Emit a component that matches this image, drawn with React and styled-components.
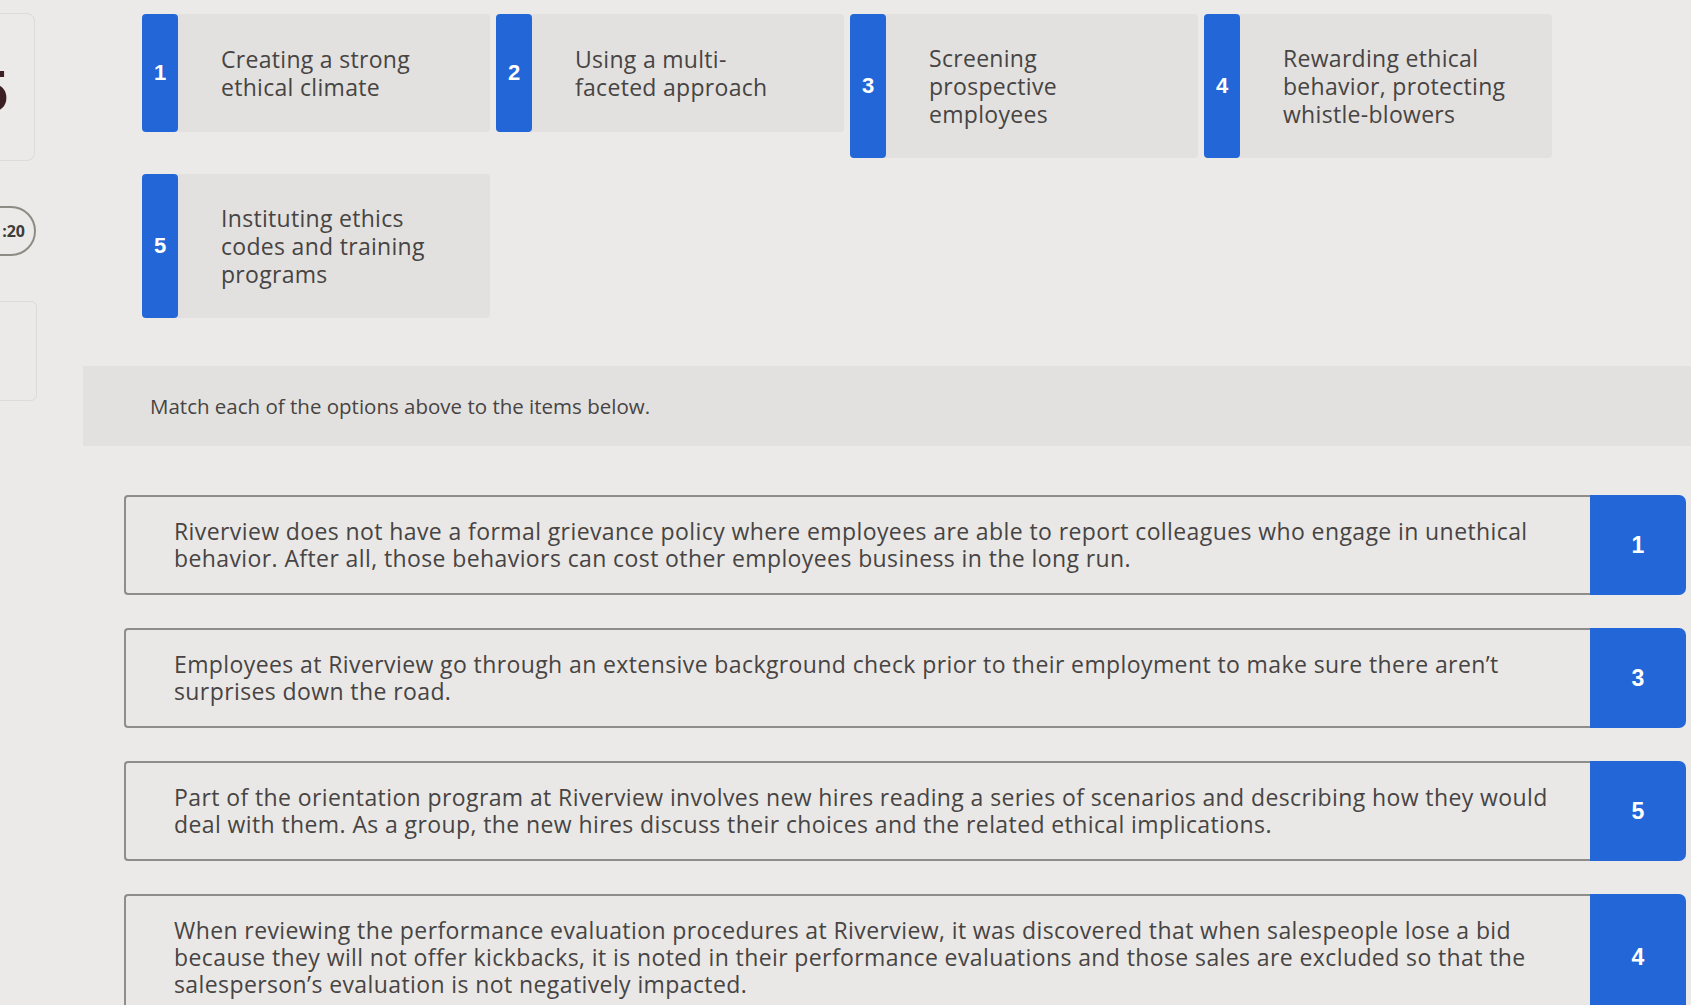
import styled, { createGlobalStyle } from "styled-components";

const options = [
  { n: 1, text: "Creating a strong ethical climate" },
  { n: 2, text: "Using a multi-faceted approach" },
  { n: 3, text: "Screening prospective employees" },
  { n: 4, text: "Rewarding ethical behavior, protecting whistle-blowers" },
  { n: 5, text: "Instituting ethics codes and training programs" },
];

const items = [
  {
    answer: 1,
    text: "Riverview does not have a formal grievance policy where employees are able to report colleagues who engage in unethical behavior. After all, those behaviors can cost other employees business in the long run.",
  },
  {
    answer: 3,
    text: "Employees at Riverview go through an extensive background check prior to their employment to make sure there aren\u2019t surprises down the road.",
  },
  {
    answer: 5,
    text: "Part of the orientation program at Riverview involves new hires reading a series of scenarios and describing how they would deal with them. As a group, the new hires discuss their choices and the related ethical implications.",
  },
  {
    answer: 4,
    text: "When reviewing the performance evaluation procedures at Riverview, it was discovered that when salespeople lose a bid because they will not offer kickbacks, it is noted in their performance evaluations and those sales are excluded so that the salesperson\u2019s evaluation is not negatively impacted.",
  },
];

const App = () => {
  return (
    <Page>
      <GlobalStyle />
      <Sidebar>
        <ProgressCard>
          <BigDigit>5</BigDigit>
        </ProgressCard>
        <TimerPill>:20</TimerPill>
        <EmptyBox />
      </Sidebar>
      <Main>
        <OptionsGrid>
          {options.map((o) => (
            <OptionCard key={o.n}>
              <NumberStrip>{o.n}</NumberStrip>
              <OptionBody>
                <OptionText>{o.text}</OptionText>
              </OptionBody>
            </OptionCard>
          ))}
        </OptionsGrid>
        <Instructions>
          <p>Match each of the options above to the items below.</p>
        </Instructions>
        <ItemList>
          {items.map((it, i) => (
            <ItemRow key={i}>
              <ItemText>{it.text}</ItemText>
              <AnswerBox>{it.answer}</AnswerBox>
            </ItemRow>
          ))}
        </ItemList>
      </Main>
    </Page>
  );
};

const GlobalStyle = createGlobalStyle`
  body {
    margin: 0;
    background-color: #ebeae8;
    font-family: "Open Sans", "Liberation Sans", sans-serif;
    color: #474443;
    overflow: hidden;
  }
`;

const Page = styled.div`
  display: flex;
  min-height: 1005px;
  background-color: #ebeae8;
`;

const Sidebar = styled.div`
  width: 38px;
  flex-shrink: 0;
  overflow: hidden;
  display: flex;
  flex-direction: column;
  align-items: flex-end;
  padding-top: 13px;
`;

const ProgressCard = styled.div`
  width: 80px;
  height: 148px;
  margin-right: 3px;
  border: 1px solid #dcdbd8;
  border-radius: 8px;
  display: flex;
  align-items: center;
  justify-content: flex-end;
  padding: 8px 26px 0 0;
  box-sizing: border-box;
`;

const BigDigit = styled.span`
  font-family: "Liberation Sans", sans-serif;
  font-size: 58px;
  font-weight: 700;
  color: #3b1f22;
  line-height: 1;
`;

const TimerPill = styled.div`
  margin-top: 45px;
  margin-right: 2px;
  width: 60px;
  height: 50px;
  border: 2px solid #8d8b83;
  border-radius: 0 26px 26px 0;
  display: flex;
  align-items: center;
  justify-content: flex-end;
  padding-right: 9px;
  box-sizing: border-box;
  font-size: 16px;
  font-weight: 700;
  color: #3e3c3a;
`;

const EmptyBox = styled.div`
  margin-top: 45px;
  margin-right: 1px;
  width: 60px;
  height: 98px;
  border: 1px solid #dcdbd8;
  border-radius: 6px;
`;

const Main = styled.div`
  flex: 1;
  padding-top: 14px;
`;

const OptionsGrid = styled.div`
  display: flex;
  flex-wrap: wrap;
  align-items: flex-start;
  column-gap: 6px;
  row-gap: 16px;
  margin-left: 104px;
  width: 1410px;
`;

const OptionCard = styled.div`
  display: flex;
  width: 348px;
  align-items: stretch;
  background-color: #e2e1df;
  border-radius: 4px;
  min-height: 118px;
`;

const NumberStrip = styled.div`
  width: 36px;
  flex-shrink: 0;
  background-color: #2366d8;
  border-radius: 4px;
  color: #fff;
  font-family: "Liberation Sans", sans-serif;
  font-weight: 700;
  font-size: 22px;
  display: flex;
  align-items: center;
  justify-content: center;
`;

const OptionBody = styled.div`
  padding: 30px 0 30px 43px;
  display: flex;
  align-items: center;
`;

const OptionText = styled.span`
  display: block;
  width: 228px;
  font-size: 23px;
  letter-spacing: 0.3px;
  line-height: 28px;
`;

const Instructions = styled.div`
  margin-top: 48px;
  margin-left: 45px;
  height: 80px;
  background-color: #e2e1df;
  display: flex;
  align-items: center;
  padding-left: 67px;
  font-size: 20.5px;

  p {
    margin: 0;
  }
`;

const ItemList = styled.div`
  display: flex;
  flex-direction: column;
  gap: 33px;
  margin: 49px 5px 0 86px;
`;

const ItemRow = styled.div`
  display: flex;
  align-items: stretch;
`;

const ItemText = styled.div`
  flex: 1;
  border: 2px solid #8e8d8a;
  border-right: none;
  border-radius: 4px 0 0 4px;
  padding: 21px 34px 21px 48px;
  font-size: 23px;
  letter-spacing: 0.4px;
  line-height: 27px;
  background-color: #e9e8e6;
`;

const AnswerBox = styled.div`
  width: 96px;
  flex-shrink: 0;
  background-color: #2366d8;
  border-radius: 0 7px 7px 0;
  color: #fff;
  font-family: "Liberation Sans", sans-serif;
  font-weight: 700;
  font-size: 23px;
  display: flex;
  align-items: center;
  justify-content: center;
`;

export default App;
